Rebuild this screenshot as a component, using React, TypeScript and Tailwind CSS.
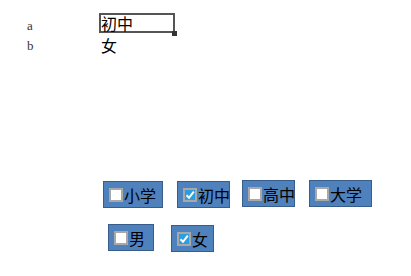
import React from "react";

interface Option {
  readonly label: string;
  readonly checked: boolean;
  readonly width: string;
  readonly offset: string;
}

const levels: readonly Option[] = [
  { label: "小学", checked: false, width: "w-[60px]", offset: "mt-[1px]" },
  { label: "初中", checked: true, width: "w-[53px] ml-[14px]", offset: "mt-[1px]" },
  { label: "高中", checked: false, width: "w-[53px] ml-[12px]", offset: "mt-0" },
  { label: "大学", checked: false, width: "w-[63px] ml-[14px]", offset: "mt-0" },
];

const genders: readonly Option[] = [
  { label: "男", checked: false, width: "w-[46px]", offset: "mt-0" },
  { label: "女", checked: true, width: "w-[43px] ml-[17px]", offset: "mt-[1px]" },
];

function Box({ checked }: { checked: boolean }) {
  if (!checked) {
    return <span className="block w-[14px] h-[14px] shrink-0 bg-white border-2 border-[#a8a8a8]" />;
  }
  return (
    <span className="flex items-center justify-center w-[14px] h-[14px] shrink-0 bg-[#2a9ee2] border-2 border-[#a8a8a8]">
      <svg width="10" height="10" viewBox="0 0 10 10">
        <path d="M1.5 5.2 L4 7.8 L8.8 1.6" fill="none" stroke="#fff" strokeWidth="2" />
      </svg>
    </span>
  );
}

function Choice({ option }: { option: Option }) {
  return (
    <label
      className={`flex items-center h-[27px] pl-[5px] whitespace-nowrap overflow-visible bg-[#4f81bd] border border-[#385d8a] ${option.width} ${option.offset}`}
    >
      <Box checked={option.checked} />
      <span className="ml-[1px] text-[16px] leading-none text-black">{option.label}</span>
    </label>
  );
}

export default function App() {
  return (
    <div
      className="w-[411px] h-[276px] bg-white relative"
      style={{ fontFamily: '"Noto Sans CJK SC", "Liberation Sans", sans-serif' }}
    >
      <div className="pt-[13px] pl-[27px] grid grid-cols-[72px_auto] auto-rows-[20px] w-max">
        <span className="flex items-end pb-[1px] text-[13px] leading-none text-[#333]" style={{ fontFamily: '"Liberation Serif", serif' }}>a</span>
        <div className="relative w-[76px] h-[20px] border-2 border-[#555] flex items-center whitespace-nowrap">
          <span className="text-[16px] leading-none text-black">初中</span>
          <span className="absolute right-[-4px] bottom-[-5px] w-[5px] h-[5px] bg-[#333]" />
        </div>
        <span className="flex items-end pb-[1px] text-[13px] leading-none text-[#333]" style={{ fontFamily: '"Liberation Serif", serif' }}>b</span>
        <span className="flex items-end pl-[2px] text-[16px] leading-none text-black">女</span>
      </div>

      <div className="mt-[127px] pl-[103px] flex items-start">
        {levels.map((o) => (
          <Choice key={o.label} option={o} />
        ))}
      </div>
      <div className="mt-[16px] pl-[108px] flex items-start">
        {genders.map((o) => (
          <Choice key={o.label} option={o} />
        ))}
      </div>
    </div>
  );
}
